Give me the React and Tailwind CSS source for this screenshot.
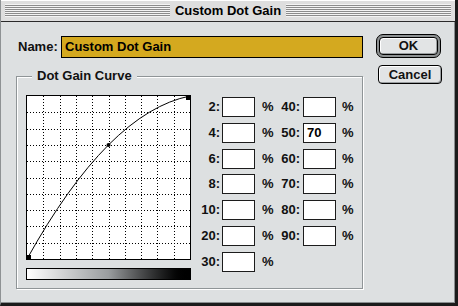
const stripe =
  "h-[13px] flex-1 bg-[repeating-linear-gradient(to_bottom,#f4f4f4_0px,#f4f4f4_1px,#8c8c8c_1px,#8c8c8c_2px)]";
const fieldBox =
  "h-[20px] w-[33px] border border-[#1c1c1c] bg-white pl-[3px] text-[13px] font-bold leading-[18px] text-black";

const leftRows = ["2", "4", "6", "8", "10", "20", "30"];
const rightRows = [
  { label: "40", value: "" },
  { label: "50", value: "70" },
  { label: "60", value: "" },
  { label: "70", value: "" },
  { label: "80", value: "" },
  { label: "90", value: "" },
];

const CurvePlot = () => {
  const size = 163;
  const step = size / 10;
  const lines = [];
  for (let i = 1; i < 10; i++) {
    const p = Math.round(i * step) + 0.5;
    lines.push(
      <line key={"v" + i} x1={p} y1={0} x2={p} y2={size} stroke="#000" strokeWidth="1" strokeDasharray="1 2" />,
      <line key={"h" + i} x1={0} y1={p} x2={size} y2={p} stroke="#000" strokeWidth="1" strokeDasharray="1 2" />
    );
  }
  return (
    <div className="h-[165px] w-[165px] border border-black bg-white">
      <svg width={size} height={size} viewBox={`0 0 ${size} ${size}`} className="block">
        {lines}
        <path
          d={`M0 ${size} Q${size * 0.5} ${size * 0.1} ${size} 0`}
          fill="none"
          stroke="#000"
          strokeWidth="1"
        />
        <rect x={0} y={size - 4} width={4} height={4} fill="#000" />
        <rect x={size - 4} y={0} width={4} height={4} fill="#000" />
        <circle cx={size * 0.5} cy={size * 0.3} r={2} fill="#000" />
      </svg>
    </div>
  );
};

const Row = ({ left, right }) => (
  <div className="flex h-[25.8px] items-start">
    <span className="w-[26px] text-right leading-[20px]">{left}:</span>
    <div className={"ml-[2px] " + fieldBox} />
    <span className="ml-[7px] w-[11px] leading-[20px]">%</span>
    {right ? (
      <>
        <span className="w-[27px] text-right leading-[20px]">{right.label}:</span>
        <div className={"ml-[3px] " + fieldBox}>{right.value}</div>
        <span className="ml-[6px] leading-[20px]">%</span>
      </>
    ) : null}
  </div>
);

export default function App() {
  return (
    <div
      className="flex h-[306px] w-[458px] flex-col border-b-[3px] border-l border-r-[3px] border-[#1b1b1b] border-l-[#8e9294] bg-[#dde0e1] text-[13px] font-bold text-[#111] shadow-[inset_-1px_-1px_0_#8a8e90]"
      style={{ fontFamily: '"Liberation Sans", Arial, sans-serif' }}
    >
      <div className="flex h-[22px] items-center gap-[4px] border-b border-[#2a2a2a] bg-[#dedede] px-[4px] shadow-[inset_0_1px_0_#ffffff]">
        <div className={stripe} />
        <span className="px-[1px] leading-[20px] text-black">Custom Dot Gain</span>
        <div className={stripe} />
      </div>

      <div className="flex">
        <div className="ml-[15px] flex w-[347px] flex-col">
          <div className="mt-[14px] flex items-center">
            <span className="ml-[2px] w-[43px]">Name:</span>
            <div className="h-[22px] flex-1 border border-black bg-[#d4a91f] pl-[3px] leading-[20px] text-black">
              Custom Dot Gain
            </div>
          </div>

          <div className="relative mt-[18px] h-[213px] border border-[#8f9597] shadow-[1px_1px_0_#ffffff,inset_1px_1px_0_#ffffff]">
            <span className="absolute left-[15px] top-[-9px] bg-[#dde0e1] px-[5px] leading-[16px]">
              Dot Gain Curve
            </span>
            <div className="ml-[9px] mt-[18px] flex">
              <div className="flex flex-col">
                <CurvePlot />
                <div className="mt-[8px] h-[12px] w-[165px] border border-black bg-gradient-to-r from-white via-[#9a9d9f] to-black" />
              </div>
              <div className="ml-[3px] mt-[2px] flex flex-col">
                {leftRows.map((l, i) => (
                  <Row key={l} left={l} right={rightRows[i]} />
                ))}
              </div>
            </div>
          </div>
        </div>

        <div className="ml-[13px] mt-[12px] flex flex-col items-start">
          <div className="rounded-[7px] border border-black bg-[#8d9192] p-[2px]">
            <div className="flex h-[18px] w-[59px] items-center justify-center rounded-[4px] border border-black bg-[#e2e4e5] shadow-[inset_1px_1px_0_#ffffff,inset_-1px_-1px_0_#9a9ea0]">
              OK
            </div>
          </div>
          <div className="ml-[2px] mt-[7px] flex h-[19px] w-[64px] items-center justify-center rounded-[4px] border border-black bg-[#e2e4e5] shadow-[inset_1px_1px_0_#ffffff,inset_-1px_-1px_0_#9a9ea0]">
            Cancel
          </div>
        </div>
      </div>
    </div>
  );
}
